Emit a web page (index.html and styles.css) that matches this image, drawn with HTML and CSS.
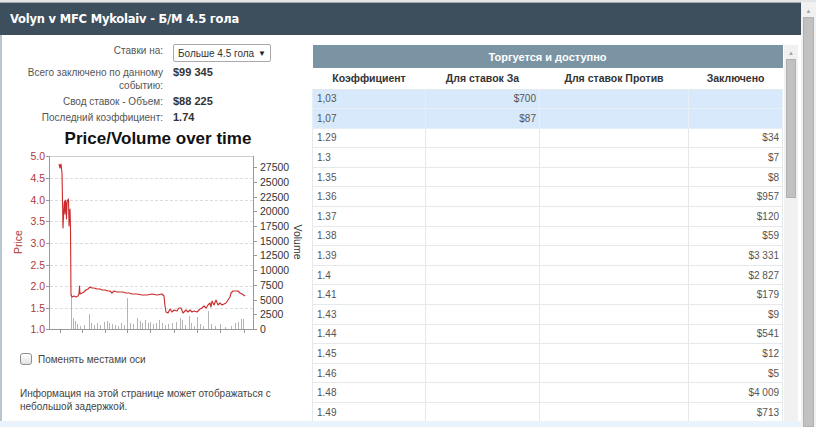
FILE: index.html
```html
<!DOCTYPE html>
<html lang="ru">
<head>
    <meta charset="UTF-8">
    <meta name="viewport" content="width=device-width, initial-scale=1.0">
    <title>Volyn v MFC Mykolaiv - Б/М 4.5 гола</title>
    <link rel="stylesheet" href="styles.css">
</head>
<body>
  <div class="topline"></div>
  <div class="window">
    <div class="page">
      <div class="header">
        <h1>Volyn v MFC Mykolaiv - Б/М 4.5 гола</h1>
      </div>
      <div class="main">
        <div class="left">
          <div class="info-grid">
            <span class="label">Ставки на:</span>
            <div class="select"><span>Больше 4.5 гола</span><span class="arrow">▼</span></div>
            <span class="label">Всего заключено по данному событию:</span>
            <span class="value">$99 345</span>
            <span class="label">Свод ставок - Объем:</span>
            <span class="value">$88 225</span>
            <span class="label">Последний коэффициент:</span>
            <span class="value">1.74</span>
          </div>
          <h2 class="chart-title">Price/Volume over time</h2>
          <svg class="chart" width="312" height="194" viewBox="0 148 312 194">
            <g stroke="#dddddd" stroke-dasharray="3 2" stroke-width="1">
              <line x1="48" y1="177.5" x2="251" y2="177.5"/>
              <line x1="48" y1="199.5" x2="251" y2="199.5"/>
              <line x1="48" y1="220.5" x2="251" y2="220.5"/>
              <line x1="48" y1="242.5" x2="251" y2="242.5"/>
              <line x1="48" y1="264.5" x2="251" y2="264.5"/>
              <line x1="48" y1="285.5" x2="251" y2="285.5"/>
              <line x1="48" y1="307.5" x2="251" y2="307.5"/>
            </g>
            <line x1="48" y1="155.5" x2="251" y2="155.5" stroke="#cccccc"/>
            <line x1="48" y1="328.5" x2="251" y2="328.5" stroke="#999999"/>
            <line x1="47.5" y1="155" x2="47.5" y2="329" stroke="#999999"/>
            <line x1="251.5" y1="155" x2="251.5" y2="329" stroke="#999999"/>
            <g stroke="#999999">
              <line x1="44" y1="155.5" x2="47" y2="155.5"/>
              <line x1="44" y1="177.5" x2="47" y2="177.5"/>
              <line x1="44" y1="199.5" x2="47" y2="199.5"/>
              <line x1="44" y1="220.5" x2="47" y2="220.5"/>
              <line x1="44" y1="242.5" x2="47" y2="242.5"/>
              <line x1="44" y1="264.5" x2="47" y2="264.5"/>
              <line x1="44" y1="285.5" x2="47" y2="285.5"/>
              <line x1="44" y1="307.5" x2="47" y2="307.5"/>
              <line x1="44" y1="328.5" x2="47" y2="328.5"/>
              <line x1="252" y1="166.5" x2="255" y2="166.5"/>
              <line x1="252" y1="181.5" x2="255" y2="181.5"/>
              <line x1="252" y1="196.5" x2="255" y2="196.5"/>
              <line x1="252" y1="210.5" x2="255" y2="210.5"/>
              <line x1="252" y1="225.5" x2="255" y2="225.5"/>
              <line x1="252" y1="240.5" x2="255" y2="240.5"/>
              <line x1="252" y1="254.5" x2="255" y2="254.5"/>
              <line x1="252" y1="269.5" x2="255" y2="269.5"/>
              <line x1="252" y1="284.5" x2="255" y2="284.5"/>
              <line x1="252" y1="299.5" x2="255" y2="299.5"/>
              <line x1="252" y1="313.5" x2="255" y2="313.5"/>
              <line x1="252" y1="328.5" x2="255" y2="328.5"/>
              <line x1="58.5" y1="329" x2="58.5" y2="332"/>
              <line x1="80.5" y1="329" x2="80.5" y2="332"/>
              <line x1="103.5" y1="329" x2="103.5" y2="332"/>
              <line x1="125.5" y1="329" x2="125.5" y2="332"/>
              <line x1="148.5" y1="329" x2="148.5" y2="332"/>
              <line x1="172.5" y1="329" x2="172.5" y2="332"/>
              <line x1="195.5" y1="329" x2="195.5" y2="332"/>
              <line x1="218.5" y1="329" x2="218.5" y2="332"/>
              <line x1="242.5" y1="329" x2="242.5" y2="332"/>
            </g>
            <g class="axis-price" text-anchor="end">
              <text x="43" y="159">5.0</text>
              <text x="43" y="181">4.5</text>
              <text x="43" y="203">4.0</text>
              <text x="43" y="224">3.5</text>
              <text x="43" y="246">3.0</text>
              <text x="43" y="268">2.5</text>
              <text x="43" y="289">2.0</text>
              <text x="43" y="311">1.5</text>
              <text x="43" y="332">1.0</text>
            </g>
            <g class="axis-volume">
              <text x="258" y="170">27500</text>
              <text x="258" y="185">25000</text>
              <text x="258" y="200">22500</text>
              <text x="258" y="214">20000</text>
              <text x="258" y="229">17500</text>
              <text x="258" y="244">15000</text>
              <text x="258" y="258">12500</text>
              <text x="258" y="273">10000</text>
              <text x="258" y="288">7500</text>
              <text x="258" y="303">5000</text>
              <text x="258" y="317">2500</text>
              <text x="258" y="332">0</text>
            </g>
            <text class="axis-name price" transform="translate(20 241) rotate(-90)" text-anchor="middle">Price</text>
            <text class="axis-name" transform="translate(292 241) rotate(90)" text-anchor="middle">Volume</text>
            <g stroke="#b4b4b4" stroke-width="1">
              <line x1="69.5" y1="328" x2="69.5" y2="293"/>
              <line x1="71.5" y1="328" x2="71.5" y2="317"/>
              <line x1="73.5" y1="328" x2="73.5" y2="320"/>
              <line x1="75.5" y1="328" x2="75.5" y2="323"/>
              <line x1="78.5" y1="328" x2="78.5" y2="325"/>
              <line x1="82.5" y1="328" x2="82.5" y2="324"/>
              <line x1="87.5" y1="328" x2="87.5" y2="313"/>
              <line x1="89.5" y1="328" x2="89.5" y2="322"/>
              <line x1="92.5" y1="328" x2="92.5" y2="324"/>
              <line x1="95.5" y1="328" x2="95.5" y2="322"/>
              <line x1="98.5" y1="328" x2="98.5" y2="324"/>
              <line x1="102.5" y1="328" x2="102.5" y2="321"/>
              <line x1="105.5" y1="328" x2="105.5" y2="320"/>
              <line x1="107.5" y1="328" x2="107.5" y2="322"/>
              <line x1="110.5" y1="328" x2="110.5" y2="323"/>
              <line x1="113.5" y1="328" x2="113.5" y2="324"/>
              <line x1="116.5" y1="328" x2="116.5" y2="325"/>
              <line x1="119.5" y1="328" x2="119.5" y2="322"/>
              <line x1="122.5" y1="328" x2="122.5" y2="324"/>
              <line x1="125.5" y1="328" x2="125.5" y2="297"/>
              <line x1="128.5" y1="328" x2="128.5" y2="322"/>
              <line x1="131.5" y1="328" x2="131.5" y2="323"/>
              <line x1="135.5" y1="328" x2="135.5" y2="317"/>
              <line x1="138.5" y1="328" x2="138.5" y2="320"/>
              <line x1="140.5" y1="328" x2="140.5" y2="322"/>
              <line x1="143.5" y1="328" x2="143.5" y2="319"/>
              <line x1="146.5" y1="328" x2="146.5" y2="322"/>
              <line x1="148.5" y1="328" x2="148.5" y2="321"/>
              <line x1="151.5" y1="328" x2="151.5" y2="323"/>
              <line x1="154.5" y1="328" x2="154.5" y2="322"/>
              <line x1="157.5" y1="328" x2="157.5" y2="319"/>
              <line x1="160.5" y1="328" x2="160.5" y2="322"/>
              <line x1="163.5" y1="328" x2="163.5" y2="324"/>
              <line x1="166.5" y1="328" x2="166.5" y2="323"/>
              <line x1="170.5" y1="328" x2="170.5" y2="322"/>
              <line x1="174.5" y1="328" x2="174.5" y2="321"/>
              <line x1="178.5" y1="328" x2="178.5" y2="317"/>
              <line x1="180.5" y1="328" x2="180.5" y2="319"/>
              <line x1="183.5" y1="328" x2="183.5" y2="324"/>
              <line x1="187.5" y1="328" x2="187.5" y2="315"/>
              <line x1="189.5" y1="328" x2="189.5" y2="322"/>
              <line x1="192.5" y1="328" x2="192.5" y2="325"/>
              <line x1="195.5" y1="328" x2="195.5" y2="316"/>
              <line x1="198.5" y1="328" x2="198.5" y2="323"/>
              <line x1="201.5" y1="328" x2="201.5" y2="325"/>
              <line x1="206.5" y1="328" x2="206.5" y2="310"/>
              <line x1="209.5" y1="328" x2="209.5" y2="323"/>
              <line x1="213.5" y1="328" x2="213.5" y2="325"/>
              <line x1="218.5" y1="328" x2="218.5" y2="323"/>
              <line x1="223.5" y1="328" x2="223.5" y2="326"/>
              <line x1="229.5" y1="328" x2="229.5" y2="325"/>
              <line x1="233.5" y1="328" x2="233.5" y2="322"/>
              <line x1="236.5" y1="328" x2="236.5" y2="321"/>
              <line x1="239.5" y1="328" x2="239.5" y2="318"/>
              <line x1="241.5" y1="328" x2="241.5" y2="318"/>
            </g>
            <polyline fill="none" stroke="#cc2b2b" stroke-width="1.1" stroke-linejoin="round"
              points="57,163 58,167 59,163 60,172 61,227 62,205 62.5,200 63,213 63.5,199 64,202 64.5,218 65,203 65.5,199 66,200 66.5,198 67,225 67.5,213 68,208 68.5,228 69,294 70,296 72,295 74,296 76,295 77,293 77.5,285 78,293 80,292 82,291 84,289 86,288 88,286 90,287 92,287 95,288 98,288 100,289 103,289 106,290 108,290 110,292 112,290 115,291 118,291 121,291 124,292 127,292 130,293 135,293 140,294 145,294 150,293 155,294 160,293 162,295 163,305 164,311 166,312 168,308 170,311 172,309 175,310 177,307 179,307 181,312 184,309 186,311 188,309 190,311 192,310 195,311 198,308 200,307 202,305 204,307 206,304 208,302 209,306 210,300 212,304 214,299 216,304 218,302 220,304 222,303 224,302 226,299 228,296 229,292 231,290 234,290 236,290 238,292 240,293 243,295"/>
          </svg>
          <label class="swap"><span class="checkbox"></span>Поменять местами оси</label>
          <p class="note">Информация на этой странице может отображаться с небольшой задержкой.</p>
        </div>
        <div class="right">
          <table class="market">
            <colgroup>
              <col class="c1">
              <col class="c2">
              <col class="c3">
              <col class="c4">
            </colgroup>
            <thead>
              <tr><th colspan="4" class="caption">Торгуется и доступно</th></tr>
              <tr class="cols">
                <th>Коэффициент</th>
                <th>Для ставок За</th>
                <th>Для ставок Против</th>
                <th>Заключено</th>
              </tr>
            </thead>
            <tbody>
              <tr class="back"><td>1,03</td><td class="num">$700</td><td></td><td></td></tr>
              <tr class="back"><td>1,07</td><td class="num">$87</td><td></td><td></td></tr>
              <tr><td>1.29</td><td></td><td></td><td class="num">$34</td></tr>
              <tr><td>1.3</td><td></td><td></td><td class="num">$7</td></tr>
              <tr><td>1.35</td><td></td><td></td><td class="num">$8</td></tr>
              <tr><td>1.36</td><td></td><td></td><td class="num">$957</td></tr>
              <tr><td>1.37</td><td></td><td></td><td class="num">$120</td></tr>
              <tr><td>1.38</td><td></td><td></td><td class="num">$59</td></tr>
              <tr><td>1.39</td><td></td><td></td><td class="num">$3 331</td></tr>
              <tr><td>1.4</td><td></td><td></td><td class="num">$2 827</td></tr>
              <tr><td>1.41</td><td></td><td></td><td class="num">$179</td></tr>
              <tr><td>1.43</td><td></td><td></td><td class="num">$9</td></tr>
              <tr><td>1.44</td><td></td><td></td><td class="num">$541</td></tr>
              <tr><td>1.45</td><td></td><td></td><td class="num">$12</td></tr>
              <tr><td>1.46</td><td></td><td></td><td class="num">$5</td></tr>
              <tr><td>1.48</td><td></td><td></td><td class="num">$4 009</td></tr>
              <tr><td>1.49</td><td></td><td></td><td class="num">$713</td></tr>
            </tbody>
          </table>
          <div class="scrollbar inner">
            <span class="up">▲</span>
            <span class="thumb"></span>
          </div>
        </div>
      </div>
      <div class="band"></div>
    </div>
    <div class="scrollbar outer">
      <span class="up">▲</span>
      <span class="thumb"></span>
    </div>
  </div>
</body>
</html>
```
FILE: styles.css
```css
*{
    margin: 0;
    padding: 0;
    box-sizing: border-box;
}
body{
    width: 816px;
    height: 427px;
    overflow: hidden;
    background-color: white;
    font-family: 'Liberation Sans', Arial, sans-serif;
    font-size: 10px;
    color: #444;
}
.topline{
    height: 3px;
    background-color: #e4e4e4;
    border-bottom: 1px solid #a8a8a8;
}
.window{
    display: flex;
    height: 424px;
}
.page{
    width: 801px;
    display: flex;
    flex-direction: column;
}
.header{
    height: 32px;
    background-color: #3d4f5d;
    display: flex;
    align-items: center;
    padding-left: 10px;
}
.header h1{
    color: white;
    font-size: 11.5px;
    font-weight: bold;
    font-family: 'DejaVu Sans', Verdana, sans-serif;
    letter-spacing: -0.2px;
}
.main{
    height: 386px;
    display: flex;
    border-left: 2px solid #b9c6cf;
}
.left{
    width: 310px;
    padding-top: 9px;
}
.info-grid{
    display: grid;
    grid-template-columns: 150px auto;
    column-gap: 10px;
    row-gap: 3px;
    padding-left: 11px;
    line-height: 13px;
    align-items: start;
}
.label{
    text-align: right;
    color: #555;
}
.value{
    font-weight: bold;
    font-size: 11px;
    color: #333;
}
.select{
    width: 98px;
    height: 18px;
    border: 1px solid #a9a9a9;
    border-radius: 2px;
    display: flex;
    align-items: center;
    justify-content: space-between;
    padding: 0 4px;
    color: #333;
    margin-bottom: 1px;
}
.select .arrow{
    font-size: 8px;
    color: #222;
}
.chart-title{
    margin-top: 5px;
    text-align: center;
    font-size: 17px;
    line-height: 20px;
    font-weight: bold;
    color: #111;
    padding-left: 2px;
}
.chart{
    display: block;
}
.chart text{
    font-family: 'Liberation Sans', Arial, sans-serif;
    font-size: 10.5px;
}
.axis-price text{
    fill: #b03a3a;
}
.axis-volume text{
    fill: #333;
}
.axis-name{
    font-size: 12px;
    fill: #333;
}
.axis-name.price{
    fill: #b03a3a;
}
.swap{
    display: flex;
    align-items: center;
    gap: 6px;
    padding-left: 18px;
    margin-top: 10px;
    color: #444;
}
.checkbox{
    width: 12px;
    height: 12px;
    border: 1px solid #8f8f8f;
    border-radius: 3px;
    background: linear-gradient(#fdfdfd, #e3e3e3);
}
.note{
    padding-left: 18px;
    padding-right: 30px;
    margin-top: 22px;
    line-height: 13px;
    color: #444;
}
.right{
    display: flex;
    padding-top: 10px;
    gap: 1px;
}
.market{
    width: 470px;
    border-collapse: collapse;
    table-layout: fixed;
    align-self: flex-start;
    color: #555;
}
.c1{ width: 113px; }
.c2{ width: 114px; }
.c3{ width: 149px; }
.c4{ width: 94px; }
.market .caption{
    height: 23px;
    background-color: #7b94a4;
    color: white;
    font-size: 11px;
    font-weight: bold;
}
.market .cols th{
    height: 21px;
    font-size: 10.5px;
    font-weight: bold;
    color: #333;
}
.market td{
    height: 19.6px;
    padding: 0 3px 0 4px;
    border: 1px solid #e6e9ec;
    border-top: none;
}
.market tbody tr:first-child td{
    border-top: 1px solid #e6e9ec;
}
.market tr.back td{
    background-color: #d7e9fa;
    border-color: #e6eef6;
}
.market td.num{
    text-align: right;
}
.band{
    flex: 1;
    background-color: #eaf2fb;
}
.scrollbar{
    display: flex;
    flex-direction: column;
    align-items: center;
    background-color: #f1f1f1;
}
.scrollbar .up{
    font-size: 6px;
    color: #a3a3a3;
    height: 12px;
    line-height: 12px;
}
.scrollbar .thumb{
    background-color: #c1c1c1;
    border: 1px solid #b0b0b0;
}
.scrollbar.inner{
    width: 14px;
    height: 380px;
    padding-top: 2px;
}
.scrollbar.inner .thumb{
    width: 10px;
    height: 139px;
}
.scrollbar.outer{
    width: 15px;
    padding-top: 3px;
    margin-top: -1px;
}
.scrollbar.outer .thumb{
    width: 11px;
    flex: 1;
}
```
